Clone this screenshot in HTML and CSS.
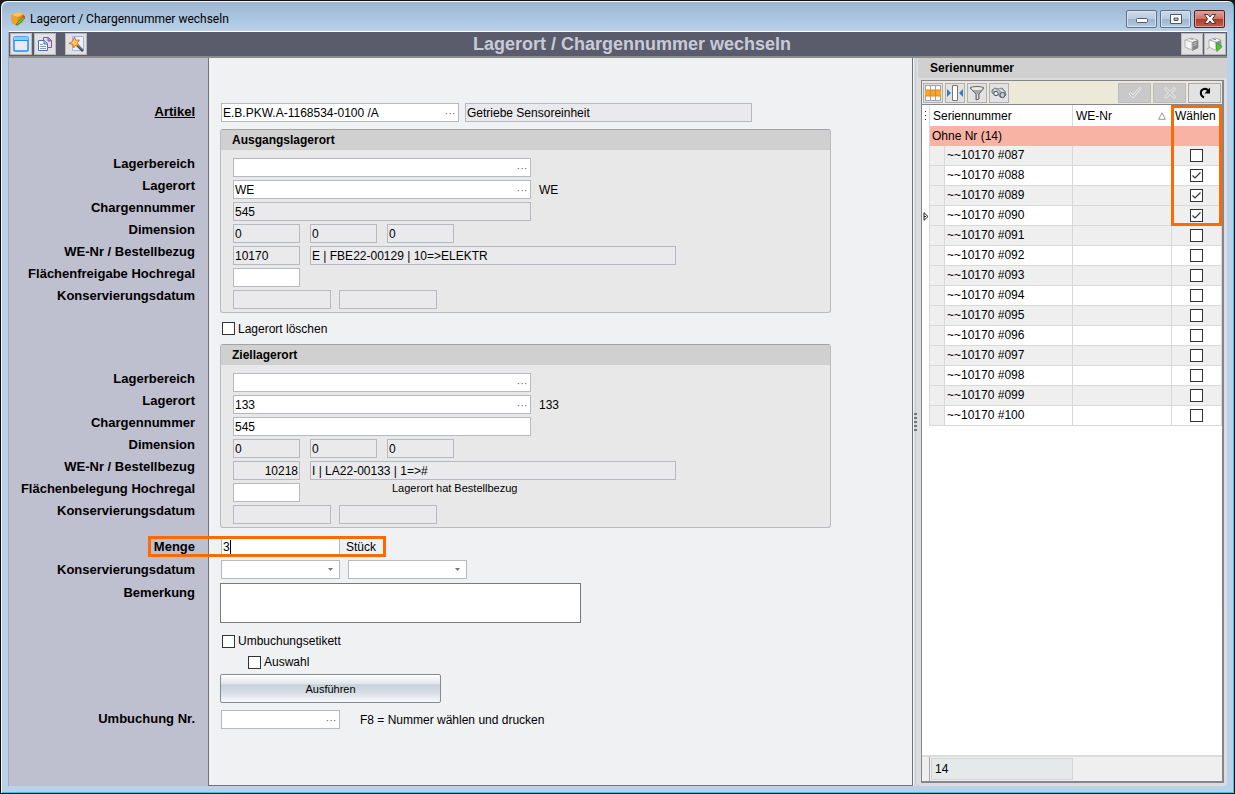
FILE: index.html
```html
<!DOCTYPE html>
<html lang="de">
<head>
<meta charset="utf-8">
<title>Lagerort / Chargennummer wechseln</title>
<link rel="stylesheet" href="styles.css">
</head>
<body>
<div class="window">
  <header class="titlebar">
    <svg class="app-icon" width="16" height="16" viewBox="0 0 16 16"><path d="M1 4 8 1l6 2-1 8-6 4-5-3z" fill="#d98c1c"/><path d="M1 4 8 1l6 2-6 3z" fill="#f7c860"/><path d="M1 4l7 2-1 9-5-3z" fill="#e9a32f"/><path d="M7 12l6-6 2 1-6 6-3 1z" fill="#58c83c" stroke="#2f7d22" stroke-width=".6"/><path d="M12 4l3 1v3l-2-1z" fill="#e34a2a"/></svg>
    <span class="window-title">Lagerort / Chargennummer wechseln</span>
    <div class="window-buttons">
      <button class="wbtn" type="button" aria-label="Minimieren"><svg width="12" height="12" viewBox="0 0 12 12"><rect x=".5" y="5.500" width="11" height="4" rx="1" fill="#fff" stroke="#50586a"/></svg></button>
      <button class="wbtn" type="button" aria-label="Maximieren"><svg width="12" height="12" viewBox="0 0 12 12"><path d="M.5 1.500h11v9H.5zM4 5v2.500h4V5z" fill="#fff" fill-rule="evenodd" stroke="#50586a"/></svg></button>
      <button class="wbtn wbtn-close" type="button" aria-label="Schließen"><svg width="12" height="12" viewBox="0 0 12 12"><path d="M.5 1.500h3.500l2 2.500 2-2.500h3.500L8.500 6l3 4.500H8L6 8l-2 2.500H.5L3.500 6z" fill="#fff" stroke="#5b3038"/></svg></button>
    </div>
  </header>

  <div class="client">
    <div class="commandbar">
      <button class="tool" type="button" aria-label="Fenster"><svg width="16" height="16" viewBox="0 0 16 16"><rect x="1" y="1" width="14" height="14" rx="1" fill="#e9e9fb" stroke="#1e90f0" stroke-width="1.500"/><path d="M1 1h14v3H1z" fill="#8cc8fa"/><path d="M1 4.500h14" stroke="#1e90f0"/></svg></button>
      <button class="tool" type="button" aria-label="Kopieren"><svg width="16" height="16" viewBox="0 0 16 16"><path d="M6.500 1.500h5l3 3v7h-8z" fill="#e6daf2" stroke="#7b5ba8"/><path d="M11 1.500V5h3.500" fill="#a98fd0" stroke="#7b5ba8"/><path d="M1.500 4.500h6l3 3v7h-9z" fill="#f4f8ff" stroke="#4d6fa8"/><path d="M7 4.500V8h3.500" fill="#b9cdea" stroke="#4d6fa8"/><path d="M3 8.500h3M3 10.500h6M3 12.500h6" stroke="#7d9bc8"/></svg></button>
      <button class="tool tool-spaced" type="button" aria-label="Assistent"><svg width="16" height="16" viewBox="0 0 16 16"><path d="M4.500.5h11v14h-11z" fill="#e9f1ff" stroke="#9ab8e6"/><path d="M9 9l6 6" stroke="#3e4554" stroke-width="2.500"/><path d="M9.500 9l5 5" stroke="#a6adba" stroke-width=".7"/><path d="M6.500 1l1.300 3.300L11.500 4 9.300 6.800l1.900 3-3.300-.8L5.500 12 5 8.500 1 7.500l3.500-2z" fill="#ffc860" stroke="#d9731a"/></svg></button>
      <h1 class="form-title">Lagerort / Chargennummer wechseln</h1>
      <div class="tools-right">
        <button class="tool" type="button" aria-label="Modul"><svg width="16" height="16" viewBox="0 0 16 16"><path d="M1 4l6-2 7 2v8l-6 2-7-3z" fill="#f4f4f4" stroke="#a2a2a2" stroke-width=".8"/><path d="M8 6l6-2v8l-6 3z" fill="#858585"/><path d="M1 4l7 2v8" fill="none" stroke="#bbb"/><path d="M9.500 7.500l3-1M9.500 9.500l3-1" stroke="#c8c8c8"/><path d="M6 3l3 .6" stroke="#7cb6c8"/></svg></button>
        <button class="tool" type="button" aria-label="Modul starten"><svg width="16" height="16" viewBox="0 0 16 16"><path d="M2 4l6-2 6 2v8l-6 2-6-3z" fill="#fafafa" stroke="#a2a2a2" stroke-width=".8"/><path d="M9 6l5-2v8l-5 2z" fill="#919191"/><path d="M2 4l7 2v8M0 13l3-2" fill="none" stroke="#aaa"/><path d="M6 3l3 .6" stroke="#38a8c8"/><path d="M9 6.500l6 4-5 5z" fill="#4fc833" stroke="#359a22" stroke-width=".8"/></svg></button>
      </div>
    </div>

    <div class="workspace">
      <div class="labels">
        <div class="label-block block-article"><label class="key" for="artikel">Artikel</label></div>
        <div class="label-block block-source">
          <label for="q-bereich">Lagerbereich</label>
          <label for="q-ort">Lagerort</label>
          <label for="q-charge">Chargennummer</label>
          <label for="q-dim">Dimension</label>
          <label for="q-we">WE-Nr / Bestellbezug</label>
          <label for="q-flaeche">Flächenfreigabe Hochregal</label>
          <label for="q-kons">Konservierungsdatum</label>
        </div>
        <div class="label-block block-target">
          <label for="z-bereich">Lagerbereich</label>
          <label for="z-ort">Lagerort</label>
          <label for="z-charge">Chargennummer</label>
          <label for="z-dim">Dimension</label>
          <label for="z-we">WE-Nr / Bestellbezug</label>
          <label for="z-flaeche">Flächenbelegung Hochregal</label>
          <label for="z-kons">Konservierungsdatum</label>
        </div>
        <div class="label-block block-quantity">
          <label for="menge">Menge</label>
          <label for="kons-von">Konservierungsdatum</label>
          <label for="bemerkung">Bemerkung</label>
        </div>
        <div class="label-block block-number"><label for="umbuchung">Umbuchung Nr.</label></div>
      </div>

      <form class="fields">
        <div class="row row-article">
          <div class="lookup w-article"><input id="artikel" type="text" value="E.B.PKW.A-1168534-0100 /A"><button type="button" aria-label="Artikel suchen">···</button></div>
          <input class="box ro w-name" type="text" readonly aria-label="Artikelbezeichnung" value="Getriebe Sensoreinheit">
        </div>

        <section class="group">
          <h2>Ausgangslagerort</h2>
          <div class="group-body">
            <div class="row"><div class="lookup w-wide"><input id="q-bereich" type="text"><button type="button" aria-label="Lagerbereich suchen">···</button></div></div>
            <div class="row"><div class="lookup w-wide"><input id="q-ort" type="text" value="WE"><button type="button" aria-label="Lagerort suchen">···</button></div><span>WE</span></div>
            <div class="row"><input id="q-charge" class="box ro w-wide" type="text" readonly value="545"></div>
            <div class="row row-dims"><input id="q-dim" class="box ro w-small" readonly value="0"><input class="box ro w-small" readonly aria-label="Dimension 2" value="0"><input class="box ro w-small" readonly aria-label="Dimension 3" value="0"></div>
            <div class="row row-dims"><input id="q-we" class="box ro w-small" readonly value="10170"><input class="box ro w-order" readonly aria-label="Bestellbezug" value="E | FBE22-00129 | 10=&gt;ELEKTR"></div>
            <div class="row"><input id="q-flaeche" class="box w-small" type="text"></div>
            <div class="row"><input id="q-kons" class="box ro w-date" readonly><input class="box ro w-date" readonly aria-label="Konservierungsdatum bis"></div>
          </div>
        </section>

        <div class="delete-row"><label class="check"><input type="checkbox">Lagerort löschen</label></div>

        <section class="group">
          <h2>Ziellagerort</h2>
          <div class="group-body">
            <div class="row"><div class="lookup w-wide"><input id="z-bereich" type="text"><button type="button" aria-label="Lagerbereich suchen">···</button></div></div>
            <div class="row"><div class="lookup w-wide"><input id="z-ort" type="text" value="133"><button type="button" aria-label="Lagerort suchen">···</button></div><span>133</span></div>
            <div class="row"><input id="z-charge" class="box w-wide" type="text" value="545"></div>
            <div class="row row-dims"><input id="z-dim" class="box ro w-small" readonly value="0"><input class="box ro w-small" readonly aria-label="Dimension 2" value="0"><input class="box ro w-small" readonly aria-label="Dimension 3" value="0"></div>
            <div class="row row-dims"><input id="z-we" class="box ro num w-small" readonly value="10218"><input class="box ro w-order" readonly aria-label="Bestellbezug" value="I | LA22-00133 | 1=&gt;#"></div>
            <div class="row"><input id="z-flaeche" class="box w-small" type="text"><small class="hint">Lagerort hat Bestellbezug</small></div>
            <div class="row"><input id="z-kons" class="box ro w-date" readonly><input class="box ro w-date" readonly aria-label="Konservierungsdatum bis"></div>
          </div>
        </section>

        <div class="row row-quantity">
          <div class="quantity"><input id="menge" class="box w-combo" type="text" value="3"><i class="caret"></i></div>
          <span>Stück</span>
          <i class="mark mark-quantity"></i>
        </div>
        <div class="row row-combos">
          <select id="kons-von" class="box w-combo"><option></option></select>
          <select class="box w-combo" aria-label="Konservierungsdatum bis"><option></option></select>
        </div>
        <textarea id="bemerkung" class="remark"></textarea>
        <div class="options">
          <label class="check"><input type="checkbox">Umbuchungsetikett</label>
          <label class="check check-sub"><input type="checkbox">Auswahl</label>
        </div>
        <button class="run" type="button">Ausführen</button>
        <div class="row row-number">
          <div class="lookup w-combo"><input id="umbuchung" type="text"><button type="button" aria-label="Umbuchung suchen">···</button></div>
          <span>F8 = Nummer wählen und drucken</span>
        </div>
      </form>

      <div class="splitter"><i class="grip"></i></div>

      <aside class="serials">
        <h2>Seriennummer</h2>
        <div class="grid">
          <div class="gridbar">
            <button class="gtool" type="button" aria-label="Spalten"><svg width="18" height="16" viewBox="0 0 18 16"><path d="M1 1h16v14H1z" fill="#fff"/><path d="M1 .5h16M1 15.500h16M1.500 1v14M6.500 1v14M11.500 1v14M16.500 1v14" stroke="#9ba4b5"/><path d="M1 5h16v6H1z" fill="#f6a530"/><path d="M6.500 5v6M11.500 5v6" stroke="#d98c20"/><path d="M1 5h16M1 11h16" stroke="#e8881c"/></svg></button>
            <button class="gtool" type="button" aria-label="Spaltenbreite"><svg width="18" height="16" viewBox="0 0 18 16"><path d="M6.500.5h5v15h-5z" fill="#fff" stroke="#777"/><path d="M1 4l4 4-4 4zM17 4l-4 4 4 4z" fill="#2f7fc1"/></svg></button>
            <button class="gtool" type="button" aria-label="Filter"><svg width="18" height="16" viewBox="0 0 18 16"><path d="M2 3c2-2 12-2 14 0l-5 6v5l-3 1V9z" fill="#a6a6a6" stroke="#666"/><ellipse cx="9" cy="3.500" rx="5.500" ry="1.500" fill="#e9e9e9"/><path d="M9.500 9v5" stroke="#e2e2e2"/></svg></button>
            <button class="gtool" type="button" aria-label="Suchen"><svg width="18" height="16" viewBox="0 0 18 16"><path d="M2 5l3-2 3 1 4-1 3 3 1 4-3 3-3-1-2-3-3 1-3-2z" fill="#a9adb4" stroke="#6b7079" stroke-width=".8"/><path d="M4 4.500l5 3M9.500 4l4 3" stroke="#e6e8ec" stroke-width="1.200"/><circle cx="6" cy="8.500" r="2.200" fill="#e4eef8" stroke="#555"/><circle cx="12.500" cy="10" r="2.500" fill="#b4d4f0" stroke="#555"/></svg></button>
            <div class="gridbar-right">
              <button class="gact" type="button" disabled aria-label="Übernehmen"><svg width="14" height="14" viewBox="0 0 14 14"><path d="M1 8l1.500-1.500L5 9l6.500-7.500L13 2.500 5 12z" fill="#c4c4c4" stroke="#f0f0f0" stroke-width=".9"/></svg></button>
              <button class="gact" type="button" disabled aria-label="Verwerfen"><svg width="14" height="14" viewBox="0 0 14 14"><path d="M1.500 3L3 1.500l4 4 4-4L12.500 3l-4 4 4 4-1.500 1.500-4-4-4 4L1.500 11l4-4z" fill="#c4c4c4" stroke="#f0f0f0" stroke-width=".9"/></svg></button>
              <button class="gact gact-on" type="button" aria-label="Aktualisieren"><svg width="14" height="14" viewBox="0 0 14 14"><path d="M6 11.500C2 10 1.500 4 6 3c2-.4 3.500.5 4 2" fill="none" stroke="#000" stroke-width="2"/><path d="M12 1.500V7.500H6.500z" fill="#000"/></svg></button>
            </div>
          </div>
          <div class="gridbody">
            <i class="mark mark-select"></i>
            <table>
              <colgroup><col class="c-mark"><col class="c-indent"><col class="c-serial"><col class="c-we"><col class="c-pick"></colgroup>
              <thead><tr><th class="mk"><svg width="2" height="9" viewBox="0 0 2 9"><path d="M0 0h1v1H0zM0 4h1v1H0zM0 8h1v1H0z" fill="#222"/></svg></th><th colspan="2">Seriennummer</th><th><div class="sorted">WE-Nr<svg width="8" height="8" viewBox="0 0 8 8"><path d="M4 .8L7.300 7.300H.7z" fill="#fff" stroke="#999"/></svg></div></th><th class="pick">Wählen</th></tr></thead>
              <tbody>
                <tr class="grp"><td class="mk"></td><td colspan="4">Ohne Nr (14)</td></tr>
                <tr><td class="mk"></td><td class="in"></td><td>~~10170 #087</td><td></td><td class="pick"><input type="checkbox" aria-label="087 wählen"></td></tr>
                <tr><td class="mk"></td><td class="in"></td><td>~~10170 #088</td><td></td><td class="pick"><input type="checkbox" checked aria-label="088 wählen"></td></tr>
                <tr><td class="mk"></td><td class="in"></td><td>~~10170 #089</td><td></td><td class="pick"><input type="checkbox" checked aria-label="089 wählen"></td></tr>
                <tr class="current"><td class="mk"><svg width="6" height="9" viewBox="0 0 6 9"><path d="M1 .7L5 4.500 1 8.300z" fill="#fff" stroke="#222"/><path d="M1 4.500h2" stroke="#222"/></svg></td><td class="in"></td><td class="focus">~~10170 #090</td><td></td><td class="pick"><input type="checkbox" checked aria-label="090 wählen"></td></tr>
                <tr><td class="mk"></td><td class="in"></td><td>~~10170 #091</td><td></td><td class="pick"><input type="checkbox" aria-label="091 wählen"></td></tr>
                <tr><td class="mk"></td><td class="in"></td><td>~~10170 #092</td><td></td><td class="pick"><input type="checkbox" aria-label="092 wählen"></td></tr>
                <tr><td class="mk"></td><td class="in"></td><td>~~10170 #093</td><td></td><td class="pick"><input type="checkbox" aria-label="093 wählen"></td></tr>
                <tr><td class="mk"></td><td class="in"></td><td>~~10170 #094</td><td></td><td class="pick"><input type="checkbox" aria-label="094 wählen"></td></tr>
                <tr><td class="mk"></td><td class="in"></td><td>~~10170 #095</td><td></td><td class="pick"><input type="checkbox" aria-label="095 wählen"></td></tr>
                <tr><td class="mk"></td><td class="in"></td><td>~~10170 #096</td><td></td><td class="pick"><input type="checkbox" aria-label="096 wählen"></td></tr>
                <tr><td class="mk"></td><td class="in"></td><td>~~10170 #097</td><td></td><td class="pick"><input type="checkbox" aria-label="097 wählen"></td></tr>
                <tr><td class="mk"></td><td class="in"></td><td>~~10170 #098</td><td></td><td class="pick"><input type="checkbox" aria-label="098 wählen"></td></tr>
                <tr><td class="mk"></td><td class="in"></td><td>~~10170 #099</td><td></td><td class="pick"><input type="checkbox" aria-label="099 wählen"></td></tr>
                <tr><td class="mk"></td><td class="in"></td><td>~~10170 #100</td><td></td><td class="pick"><input type="checkbox" aria-label="100 wählen"></td></tr>
              </tbody>
            </table>
          </div>
          <div class="gridfoot"><output>14</output></div>
        </div>
      </aside>
    </div>
  </div>
</div>
</body>
</html>
```

FILE: styles.css
```css
* { box-sizing: border-box; }

body {
  margin: 0;
  background: #1a1a1e;
  color: #000;
  font: 12px/16px "Liberation Sans", Arial, sans-serif;
}

h1, h2 { margin: 0; }
button, input, select, textarea { margin: 0; font: inherit; color: inherit; }
button { padding: 0; display: flex; align-items: center; justify-content: center; }
i { display: block; }

/* window frame */
.window {
  min-height: 100vh;
  display: flex;
  flex-direction: column;
  padding: 0 7px 7px 7px;
  border: 1px solid #111;
  border-radius: 7px 7px 0 0;
  background: linear-gradient(#9ab5d1, #b9d1ea 30px, #bad1ea);
  box-shadow: inset 1px 1px #f2f8ff, inset -1px -1px #2fc8e8;
}

.titlebar {
  height: 30px;
  display: flex;
  align-items: center;
  gap: 4px;
  padding: 6px 2px 0 2px;
}
.window-title { font: 12px/16px Roboto, "Open Sans", sans-serif; }
.window-buttons { display: flex; gap: 3px; margin-left: auto; }
.wbtn {
  width: 31px;
  height: 18px;
  border: 1px solid #5f7187;
  border-radius: 2px;
  background: linear-gradient(#c9d9ea, #b9cce0 48%, #9cb4ce 52%, #b4cae2);
  box-shadow: inset 0 0 0 1px #d5e3f1;
}
.wbtn-close {
  border-color: #5a1f22;
  background: linear-gradient(#dea498, #cc7363 48%, #b03a2a 52%, #c2604a);
  box-shadow: inset 0 0 0 1px #dc9d90;
}

.client {
  flex: 1;
  display: flex;
  flex-direction: column;
  border-top: 1px solid #fff;
  border-left: 1px solid #a9aab4;
}

/* command bar */
.commandbar {
  height: 26px;
  display: flex;
  align-items: center;
  gap: 2px;
  padding: 0 1px;
  background: #5a5c6c;
  border-bottom: 2px solid #8b8b8d;
}
.tool {
  width: 22px;
  height: 22px;
  border: 1px solid #b9b9bb;
  background: #e1e1e2;
}
.tool-spaced { margin-left: 7px; }
.form-title {
  flex: 1;
  padding-right: 4px;
  color: #c9cad8;
  font-size: 18px;
  line-height: 22px;
  text-align: center;
}
.tools-right { display: flex; gap: 1px; }

.workspace { flex: 1; display: flex; }

/* label column */
.labels {
  width: 200px;
  flex: none;
  padding: 43px 13px 0 0;
  background: #bebfcf;
  border-right: 1px solid #717178;
  font-size: 13px;
  font-weight: bold;
  line-height: 22px;
  text-align: right;
}
.label-block { display: flex; flex-direction: column; }
.key { text-decoration: underline; }
.block-source { margin-top: 30px; }
.block-target { margin-top: 61px; }
.block-quantity { margin-top: 14px; gap: 1px; }
.block-number { margin-top: 104px; }

/* form */
.fields {
  flex: 1;
  padding: 45px 12px 0 12px;
  background: #f0f1f3;
  border: solid #717178;
  border-width: 0 1px 1px 0;
}
.row { display: flex; align-items: center; gap: 8px; }
.row-article { gap: 6px; }
.row-dims { gap: 10px; }

.box, .lookup {
  height: 19px;
  border: 1px solid #b6b9c0;
  border-radius: 0;
  background: #fff;
}
.box { padding: 0 1px; }
.box.ro { background: #eaeaec; }
.num { text-align: right; }
.lookup { display: flex; }
.lookup input { flex: 1; min-width: 0; padding: 0 1px; border: 0; background: none; }
.lookup button { width: 16px; border: 0; background: none; color: #666; font-size: 11px; line-height: 12px; }
.w-article { width: 238px; }
.w-name { width: 287px; }
.w-wide { width: 298px; }
.w-small { width: 67px; }
.w-order { width: 366px; }
.w-date { width: 98px; }
.w-combo { width: 119px; }

.group {
  max-width: 611px;
  margin-left: -1px;
  border: 1px solid #b9bbbf;
  border-top-color: #a2a3a5;
  border-radius: 3px;
  background: #e8e8e8;
}
.row-article { margin-bottom: 7px; }
.group h2 {
  height: 20px;
  padding-left: 11px;
  background: #d0d0d0;
  font-size: 12px;
  line-height: 20px;
}
.group-body {
  display: flex;
  flex-direction: column;
  gap: 3px;
  padding: 8px 12px 3px;
}
.hint { align-self: flex-start; margin-left: 84px; font-size: 11px; line-height: 10px; }

.check { display: flex; align-items: center; gap: 3px; }
input[type="checkbox"] {
  width: 13px;
  height: 13px;
  appearance: none;
  border: 1px solid #333;
  background: #fff;
}
input[type="checkbox"]:checked {
  background: #fff url("data:image/svg+xml,%3Csvg xmlns='http://www.w3.org/2000/svg' viewBox='0 0 11 11'%3E%3Cpath d='M1.500 5.500L4 8l5.500-5.500' fill='none' stroke='%23333' stroke-width='1.200'/%3E%3C/svg%3E");
}
.delete-row { height: 31px; display: flex; align-items: center; padding-left: 1px; }

.row-quantity { position: relative; margin-top: 9px; gap: 6px; }
.quantity { position: relative; display: flex; }
.caret { position: absolute; left: 9px; top: 3px; width: 1px; height: 14px; background: #000; }
.row-combos { margin: 4px 0; }
select.box {
  appearance: none;
  background: #fff url("data:image/svg+xml,%3Csvg xmlns='http://www.w3.org/2000/svg' viewBox='0 0 5 3'%3E%3Cpath d='M0 0h5L2.500 3z' fill='%23777'/%3E%3C/svg%3E") no-repeat right 6px center / 5px 3px;
}
.remark {
  display: block;
  width: 361px;
  height: 40px;
  margin-left: -1px;
  border: 1px solid #777a80;
  background: #fff;
  resize: none;
}
.options { display: flex; flex-direction: column; gap: 5px; padding: 10px 0 4px 1px; }
.check-sub { margin-left: 26px; }
.run {
  width: 221px;
  height: 29px;
  margin-left: -1px;
  border: 1px solid #868a98;
  border-radius: 2px;
  background: linear-gradient(#fff, #dfe4ea 34%, #c7d0da 36%, #d3dae2 60%, #f8f9fb);
  font-size: 11px;
}
.row-number { margin-top: 7px; gap: 20px; }

/* highlight frames */
.mark { position: absolute; z-index: 1; border: 3px solid #ff6a00; pointer-events: none; }
.mark-quantity { left: -73px; top: -1px; width: 238px; height: 21px; }
.mark-select { right: 0; top: 0; width: 51px; height: 121px; }

/* splitter */
.splitter {
  width: 5px;
  flex: none;
  display: flex;
  align-items: center;
  justify-content: center;
  background: linear-gradient(90deg, #fff, #c9ced4 40%, #dfe2e5);
}
.grip {
  width: 3px;
  height: 18px;
  background: repeating-linear-gradient(#777 0 2px, transparent 2px 4px);
}

/* serial number panel */
.serials {
  width: 309px;
  flex: none;
  display: flex;
  flex-direction: column;
  padding: 0 3px 3px 3px;
  border-radius: 4px;
  background: #dcdcde;
}
.serials h2 {
  height: 20px;
  margin: 0 -3px 2px -3px;
  padding-left: 12px;
  background: #d0d0d0;
  font-size: 12px;
  line-height: 20px;
}
.grid {
  flex: 1;
  display: flex;
  flex-direction: column;
  border: 1px solid #85858c;
  border-width: 1px 2px 2px 1px;
  background: #fff;
}
.gridbar {
  height: 24px;
  display: flex;
  align-items: center;
  gap: 2px;
  padding: 0 1px;
  background: #ece9d8;
  border-bottom: 1px solid #85858c;
}
.gtool { width: 20px; height: 20px; border: 1px solid #aeb0b4; background: #e2e2e3; }
.gridbar-right { display: flex; gap: 2px; margin-left: auto; }
.gact { width: 33px; height: 20px; border: 1px solid #bcbcbc; background: #c9c9c9; }
.gact-on { border-color: #aaa; background: #e2e2e2; }
.gridbody { flex: 1; position: relative; }
table { width: 100%; table-layout: fixed; border-collapse: separate; border-spacing: 0; }
.c-mark { width: 8px; }
.c-indent { width: 15px; }
.c-serial { width: 128px; }
.c-we { width: 99px; }
th { height: 21px; padding: 0 3px; border-right: 1px solid #d8d8d8; font-weight: normal; text-align: left; white-space: nowrap; }
td { height: 20px; padding: 0 2px; border: solid #d8d8d8; border-width: 0 1px 1px 0; line-height: 19px; }
tr:nth-child(even) td, .current td, td.in { background: #efefef; }
td.focus, tr td.mk { background: #fff; }
td.focus { background: #fff !important; }
th.mk, td.mk { padding: 0; border-bottom: 0; }
.mk svg { display: block; margin-left: 1px; }
th.mk svg { margin-left: 3px; }
.grp td:not(.mk) { height: 19px; border: 0; background: #f8b3a4; line-height: 18px; }
th.pick { padding: 0 0 0 3px; border-right: 0; }
td.pick { padding: 0; text-align: center; line-height: 0; }
td.pick input { vertical-align: middle; }
.sorted { display: flex; align-items: center; justify-content: space-between; padding-right: 2px; }
.gridfoot {
  height: 26px;
  padding: 1px 0 1px 9px;
  border-top: 2px solid #dcdcdc;
  background: linear-gradient(90deg, #efefef 7px, #a5a5aa 7px 8px, #efefef 8px);
}
output {
  display: block;
  width: 142px;
  height: 22px;
  padding-left: 3px;
  border: 1px solid #d2d4d5;
  background: #e6e9ea;
  line-height: 20px;
}
```
